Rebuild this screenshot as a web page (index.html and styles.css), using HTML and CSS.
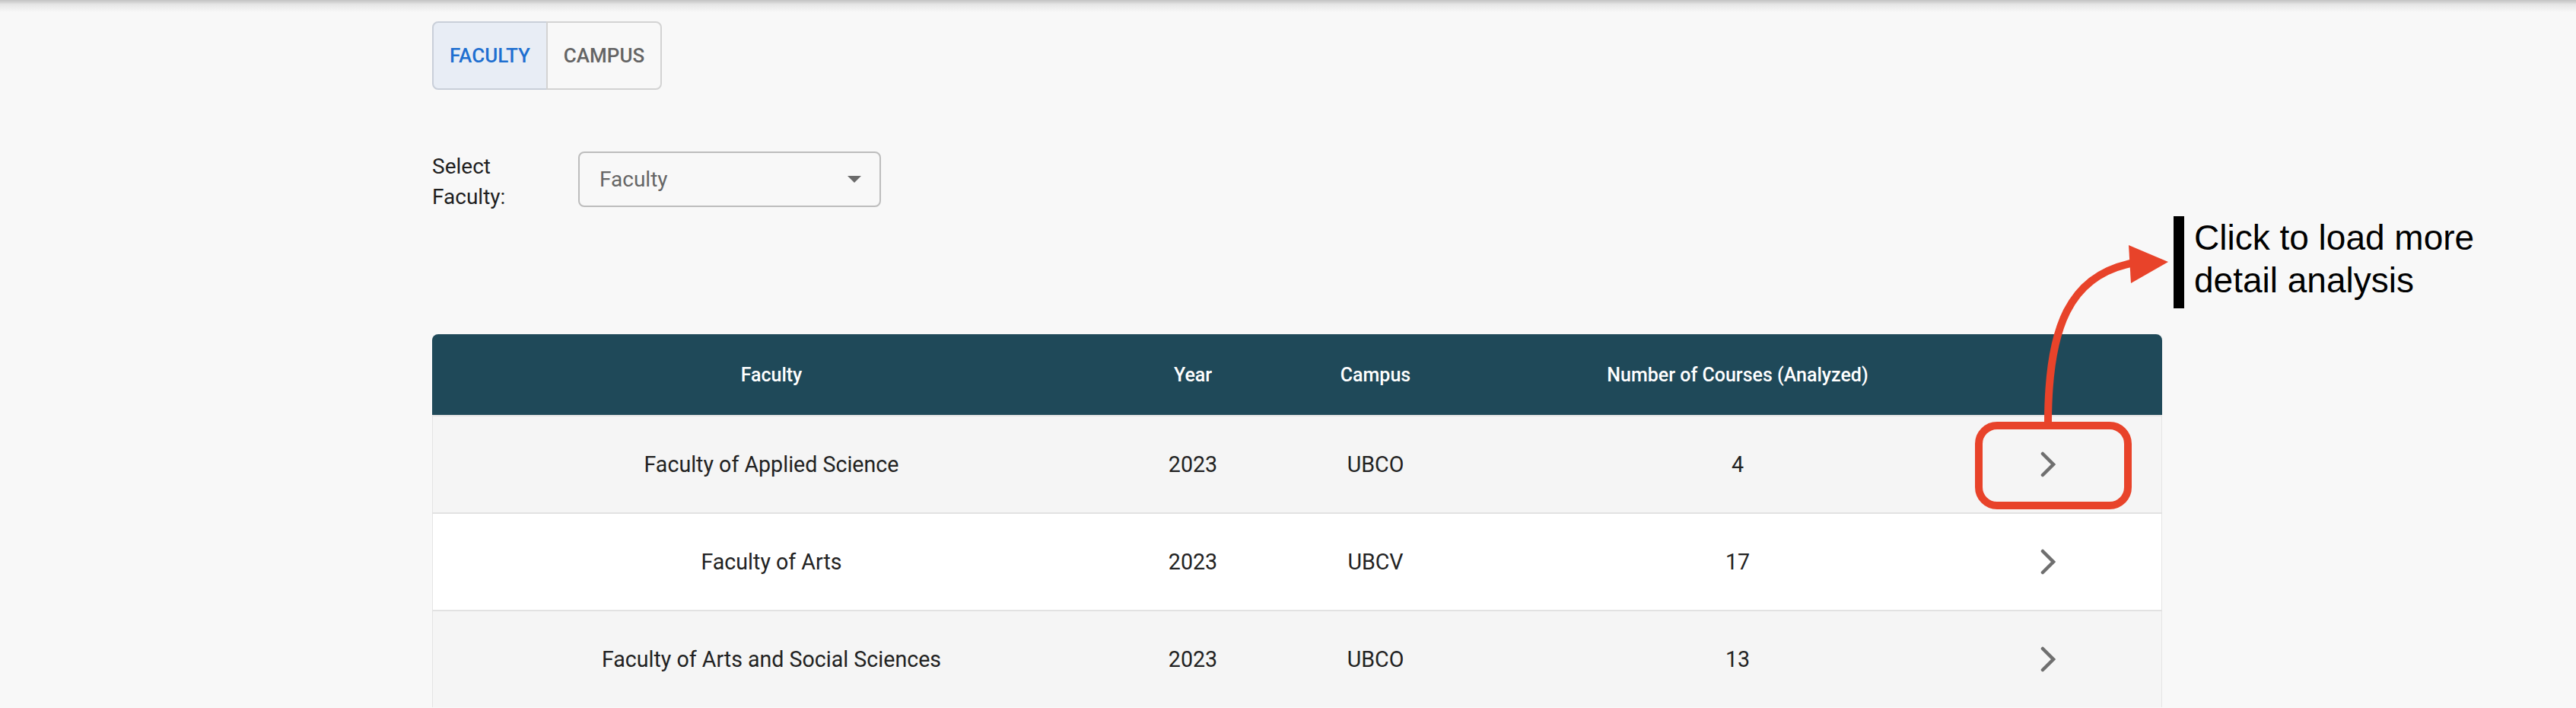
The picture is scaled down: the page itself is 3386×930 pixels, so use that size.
FILE: index.html
```html
<!DOCTYPE html>
<html lang="en">
<head>
<meta charset="utf-8">
<title>Faculty Analysis</title>
<link rel="stylesheet" href="styles.css">
</head>
<body>
<main class="page">
  <div class="toggle-group">
    <button class="toggle selected">Faculty</button>
    <button class="toggle">Campus</button>
  </div>

  <div class="filter-row">
    <label class="filter-label">Select Faculty:</label>
    <div class="select">
      <span class="select-value">Faculty</span>
      <svg class="select-arrow" viewBox="0 0 18 9" width="18" height="9"><path d="M0 0 L18 0 L9 9 Z"/></svg>
    </div>
  </div>

  <section class="table">
    <div class="row head">
      <div class="cell">Faculty</div>
      <div class="cell">Year</div>
      <div class="cell">Campus</div>
      <div class="cell">Number of Courses (Analyzed)</div>
      <div class="cell action"></div>
    </div>
    <div class="row odd">
      <div class="cell">Faculty of Applied Science</div>
      <div class="cell">2023</div>
      <div class="cell">UBCO</div>
      <div class="cell">4</div>
      <div class="cell action"><svg class="chev" viewBox="0 0 20 34" width="20" height="34"><polyline points="3,3 17,17 3,31"/></svg></div>
    </div>
    <div class="row">
      <div class="cell">Faculty of Arts</div>
      <div class="cell">2023</div>
      <div class="cell">UBCV</div>
      <div class="cell">17</div>
      <div class="cell action"><svg class="chev" viewBox="0 0 20 34" width="20" height="34"><polyline points="3,3 17,17 3,31"/></svg></div>
    </div>
    <div class="row odd">
      <div class="cell">Faculty of Arts and Social Sciences</div>
      <div class="cell">2023</div>
      <div class="cell">UBCO</div>
      <div class="cell">13</div>
      <div class="cell action"><svg class="chev" viewBox="0 0 20 34" width="20" height="34"><polyline points="3,3 17,17 3,31"/></svg></div>
    </div>
  </section>
</main>

<svg class="annotation" viewBox="0 0 3386 930" width="3386" height="930">
  <rect x="2601" y="559" width="196" height="105" rx="24" ry="24" class="anno-stroke"/>
  <path d="M2692 556 C2692 430 2720 360 2806 345" class="anno-stroke"/>
  <polygon points="2798,322 2850,344 2801,372" class="anno-fill"/>
</svg>
<div class="callout">Click to load more<br>detail analysis</div>
</body>
</html>
```

FILE: styles.css
```css
* { box-sizing: border-box; }

html, body {
  margin: 0;
  height: 930px;
  overflow: hidden;
}

body {
  position: relative;
  font-family: Roboto, "Noto Sans", sans-serif;
  background: linear-gradient(to bottom, #c2c2c2 0px, #e6e6e6 6px, #f8f8f8 16px) top left / 100% 16px no-repeat, #f8f8f8;
  color: #212121;
}

.page {
  padding: 28px 0 0 568px;
}

.toggle-group {
  display: flex;
  height: 90px;
}

.toggle {
  width: 152px;
  height: 90px;
  border: 2px solid #d3d3d3;
  background: transparent;
  font-family: Roboto, sans-serif;
  font-weight: 500;
  font-size: 26px;
  letter-spacing: 0;
  text-transform: uppercase;
  color: #646464;
  padding: 0;
  margin: 0;
}

.toggle:first-child {
  border-radius: 8px 0 0 8px;
}

.toggle + .toggle {
  margin-left: -2px;
  border-radius: 0 8px 8px 0;
}

.toggle.selected {
  background: #e8edf5;
  color: #1f6fd0;
  border-color: #c9cfd9;
}

.filter-row {
  display: flex;
  align-items: flex-start;
  margin-top: 81px;
}

.filter-label {
  width: 130px;
  margin-right: 62px;
  font-size: 28px;
  line-height: 40px;
  color: #1e1e1e;
}

.select {
  width: 398px;
  height: 73px;
  border: 2px solid #bdbdbd;
  border-radius: 8px;
  display: flex;
  align-items: center;
  justify-content: space-between;
  padding: 0 24px 0 26px;
}

.select-value {
  font-size: 28px;
  color: #666;
}

.select-arrow {
  fill: #6b6b6b;
  display: block;
}

.table {
  width: 2274px;
  margin-top: 160px;
}

.row {
  display: grid;
  grid-template-columns: 892px 216px 264px 688px 214px;
  height: 128px;
  background: #fff;
  border-top: 2px solid #e2e2e2;
  box-shadow: inset 1px 0 #e4e4e4, inset -1px 0 #e4e4e4;
  font-size: 28.6px;
  color: #222;
}

.row.odd {
  background: #f5f5f5;
}

.row.head {
  height: 106px;
  background: #1f4959;
  border-top: none;
  border-radius: 8px 8px 0 0;
  box-shadow: none;
  font-size: 25px;
  font-weight: 500;
  color: #fff;
}

.cell {
  display: flex;
  align-items: center;
  justify-content: center;
}

.cell.action {
  padding-right: 86px;
}

.chev {
  display: block;
  fill: none;
  stroke: #6f6f6f;
  stroke-width: 4.5;
  stroke-linecap: round;
  stroke-linejoin: miter;
}

.annotation {
  position: absolute;
  left: 0;
  top: 0;
  pointer-events: none;
}

.anno-stroke {
  fill: none;
  stroke: #e8432a;
  stroke-width: 10;
}

.anno-fill {
  fill: #e8432a;
}

.callout {
  position: absolute;
  left: 2857px;
  top: 284px;
  border-left: 14px solid #000;
  padding: 0 0 9px 13px;
  font-family: "Liberation Sans", Arial, sans-serif;
  font-size: 46px;
  line-height: 56px;
  color: #000;
  white-space: nowrap;
}
```
